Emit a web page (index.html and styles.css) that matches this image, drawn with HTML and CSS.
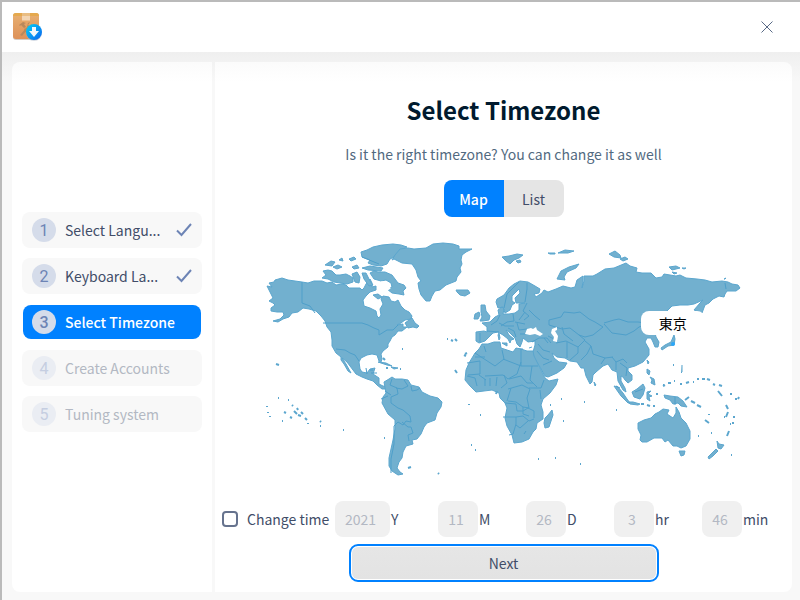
FILE: index.html
```
<!DOCTYPE html>
<html lang="en">
<head>
    <meta charset="UTF-8">
    <meta name="viewport" content="width=device-width, initial-scale=1.0">
    <title>Select Timezone</title>
    <link rel="stylesheet" href="styles.css">
</head>
<body>
    <header class="titlebar">
        <svg class="logo" width="32" height="32" viewBox="0 0 32 32" aria-hidden="true">
            <defs>
                <linearGradient id="box" x1="0" y1="0" x2="0" y2="1">
                    <stop offset="0" stop-color="#e8b071"/>
                    <stop offset="1" stop-color="#dd9159"/>
                </linearGradient>
                <linearGradient id="badge" x1="0" y1="0" x2="1" y2="1">
                    <stop offset="0" stop-color="#05d3f5"/>
                    <stop offset="1" stop-color="#0b62f0"/>
                </linearGradient>
            </defs>
            <rect x="2" y="3" width="26" height="26" rx="3" fill="#d3ccc5"/>
            <rect x="2" y="2" width="26" height="26" rx="3" fill="url(#box)"/>
            <path d="M5 2h20a3 3 0 0 1 3 3H2a3 3 0 0 1 3-3z" fill="#e5a94e"/>
            <path d="M11 2h8v3h-8z" fill="#e9bd83"/>
            <path d="M11 5h8v4l-1 1-1-1-1 1-1-1-1 1-1-1-1 1-1-1z" fill="#f3d5b3"/>
            <path d="M8 14l4-3 3 1-2 1 2 3-2 1-3-3-1 1zM19 11l-2 3 2 1 2-2-1 4-3 1-6 7-2-1 7-8 1-4zM14 17l7 8-2 1-6-7z" fill="#b8895c"/>
            <circle cx="23" cy="22" r="8" fill="#a9b5c8" opacity=".5"/>
            <circle cx="23" cy="21" r="8" fill="url(#badge)"/>
            <path d="M21 16h4v4h3l-5 6-5-6h3z" fill="#f3f7fb"/>
        </svg>
        <button class="close" type="button" aria-label="Close">
            <svg width="12" height="12" viewBox="0 0 12 12"><path d="M.5.5l11 11M11.5.5l-11 11" stroke="#596a86" fill="none"/></svg>
        </button>
    </header>

    <div class="window">
        <nav class="sidebar">
            <ol class="steps">
                <li class="step done">
                    <span class="num">1</span><span class="name">Select Langu...</span>
                    <svg class="check" width="16" height="14" viewBox="0 0 16 14"><path d="M1 7.500l4.500 4.500L15 1" fill="none" stroke="#6d84b5" stroke-width="2"/></svg>
                </li>
                <li class="step done">
                    <span class="num">2</span><span class="name">Keyboard La...</span>
                    <svg class="check" width="16" height="14" viewBox="0 0 16 14"><path d="M1 7.500l4.500 4.500L15 1" fill="none" stroke="#6d84b5" stroke-width="2"/></svg>
                </li>
                <li class="step active"><span class="num">3</span><span class="name">Select Timezone</span></li>
                <li class="step todo"><span class="num">4</span><span class="name">Create Accounts</span></li>
                <li class="step todo"><span class="num">5</span><span class="name">Tuning system</span></li>
            </ol>
        </nav>

        <main class="content">
            <h1>Select Timezone</h1>
            <p class="subtitle">Is it the right timezone? You can change it as well</p>
            <div class="switch">
                <button class="tab selected" type="button">Map</button>
                <button class="tab" type="button">List</button>
            </div>

            <div class="map">
                <svg viewBox="259 235 490 245" role="img" aria-label="World map">
                    <g class="land">
                        <!-- north america -->
                        <path d="M267 286l5 1-3-4 5-1 1-2 7-2 6 2 7 1 7 1 6 1 6-2 8 0 5 2 5-1 4 3 6-1 4 1 3 3 6 0 5 0 2 2 2-2 2-4 4-5 2 4 0 4 4-1 0 4-6 2-4 4-3 4 1 6 6 2 6 3 1 5 2 2 2-3-1-6 3-5-2-5 2-3 6 1 2 4 4 1 3-2 3 6 4 4 4 2 3 4-1 3-6 1-4 3-4 2 6-1 0 3 4 0-5 4-4 0-3 4-3 2-2 4-2 3 0 3-5 4-2 3 1 5-1 3-2-1-2-6-5-1-5 1-6 3-2 4 1 7 2 3 5 1 3-4 5-1-2 6 3 2 3 2 0 6 4 2 4 1-1 2-4 0-5-4-4-4-6-2-5-2-6-3-3-4-6-8-5-4 4 6 5 9-3-2-4-7-3-4 0-3-5-4-4-7 0-6-1-8-4-5-2-6-4-5-5-5-7-2-6-1-5 4-6 1-3 4-6 2-5 3-5-1 7-2 4-4-1-3-6 0-6-1 0-3 4-3-2-2-4-2 4-3z"/>
                        <!-- arctic islands -->
                        <path d="M361 252l6-2 6-3 9-2 11-1 8 1 6 2-8 4-3 5-6 3-3 5-6 2-8-1-5-2 2-3-8-3z"/>
                        <path d="M323 271l5-1 4 1 4 4 4 0 6-1 4 2 3 2 0 4-6 2-7-1-6-1-6-3-6-1 4-3z"/>
                        <path d="M370 273l4-2 4 1 7 0 7 3 3 4 3 4 6 2 2 3-3 3 1 4-5-1-7-1-5-4 5-2-1-4-5-3-5 1-7-2z"/>
                        <path d="M325 265l6-4 4 1-3 4zM333 267l5-2 4 2-5 2zM339 260l3-2 1 3zM349 259l5-2 2 2-5 2zM352 267l5-2 2 3-5 1zM352 274l5-2 3 5-1 6-4-1zM362 273l4 0 4 8 3 4-4 1-5-7zM362 268l8-2 13 2-2 3-13-1zM373 295l5-1 4 3-4 2z"/>
                        <path d="M405 323l4-3 3-2 3 5 4 3-2 2-4-1-5 1z"/>
                        <!-- greenland, iceland, svalbard -->
                        <path d="M392 260l3-5 5-6 8-1 6 1 12-1 7-4 10-1 10 1 6 2 0 3 13 0-6 3-4 3-1 5 1 4-2 4 1 4-4 5-1 4-5 2-5 2-6 5-5 1-3 5-2 5-4 0-5-6-2-6-1-6 3-2-3-4-2-7-4-6-10-1-8-4z"/>
                        <path d="M456 290l12 0 2 3-5 3-5-1-3-3zM502 257l7-1 8-2 6 1-4 3-5 2-4 4-4-3zM516 261l4-1 1 2-3 1zM548 253l7 0 0 1-5 0zM558 253l7-3 9 1-6 2z"/>
                        <path d="M557 279l4-8 8-4 10-3-3 4-9 4-3 5 1 3zM609 254l6-3 5 4 1 3-7-1zM620 259l5-2 3 2-5 2zM669 267l7-1 4 2-8 2zM682 268l4 0-2 1zM672 272l5 1-3 1zM724 279l2-1-1 1z"/>
                        <!-- eurasia -->
                        <path d="M476 332l8-1 3 1 0-5-5-4 8-1 5-5 4-2-1-5 4-3 2 2-1 5 6 0 6-1 4-3 0-6 6-1-9 0-1-5 5-5-1-4-3 3-4 4 0 5 3 2-3 2-2 5-5 3-2-6-5 1-2-6 1-3 7-4 5-7 5-4 6-3 8 1 7 4 5 3-1 4-5 1 2 3 6-4 2-3 4 2 8-3 7-3 8 2 4-1 2-7 6-4 0 5-1 7 2-7 0-5 9 0 4-2 8-5 9-1 12-5 4 3 7 2-1 4 6 1 9 0 5 5 6-1 2-3 12 2 4-1 6 3 11 1 8 1 7 2 10-1 6 1 4 2 6 1 2 3-4 3-9 0-2 3-1 3-5-1-6 3-4 4-4 2-3 8-8-3 6-7 3-3-9 4-6 1-8 0-8 1-5 5-8 6-4 9 0 7 1 4 3 5-1 5-3 0-2-5-2-4-4 0-2 4 4 7 0 6-6 7-8 4-7 2 0 3 4 4 0 5-4 3-3-3-2-3-2-1 0 5 4 7 1 4-3-2-5-9-1-9-5-2-4-6-5 2-7 6-3 3-1 7-2 2-4-8-2-8-3 0-4-6-7-1-5-3-8-1-5-4 2 5 5 4 8 1-3 5-7 5-9 4-3-1-5-9-6-9-1-6 2-7 0-4-7 1-5-4-1 4-2 5-3-3-2-6-6-6-3-2 3 5 5 4-3 1-1 3-2-4-5-4-5-3-5 1-4 4-4 4-6 2-3-2z"/>
                        <path d="M481 305l4 0 1 6 4 5-1 4-6 1-3 0 2-4-1-5zM475 314l4-2 1 3-2 4-4 0zM502 343l5 0 0 3zM499 333l1 5-1 2-1-5zM519 349l4 0M529 348l3-1"/>
                        <!-- africa -->
                        <path d="M475 353l4-4 3-5 6 0 6-2 6 0 1 6 6 2 6 2 3-4 5 1 6 2 6 0 1 5 6 12 5 10 4 3 9-2-2 6-6 8-7 6-2 6 2 7 0 7-6 4-1 6-3 3-4 7-7 3-8 1-2-8-5-9-2-8 2-10-2-5-5-5-1-5-7-3-8 1-8 1-6-6-5-6 1-10 3-7z"/>
                        <path d="M545 418l3-3 4-5 1 5-4 12-4 1-1-5z"/>
                        <!-- south america -->
                        <path d="M384 382l5-3 3-2 3 2 7 0 6 1 3 5 8 2 3 5 8 4 8 2 4 4-1 5-4 6-2 7-8 3-3 4-3 7-4 5-5 1 1 4-7 2-3 6-1 6-3 4-2 6 3 4 3 2-5 1-6-4-3-5 0-8 2-9 2-9 2-11 0-9-7-6-6-11 1-6 3-4z"/>
                        <!-- oceania -->
                        <path d="M638 423l6-3 7-2 4-4 4-2 4-3 6 1-2 4 6 4 3-5 0-6 3 5 2 6 5 5 4 8 0 8-4 7-5 2-4-2-4 0-5-6-3 2-3-4-8 0-7 4-5 0-2-2 1-5-3-6zM679 451l6 0-1 4-3 1zM717 441l2 3 5 1-3 4-3-1zM716 449l2 2-5 5-4 3-1-2z"/>
                        <path d="M614 386l4 1 5 6 4 6 3 4-2 0-7-7zM628 402l5 0 7 2-2 1-8-1zM632 392l5-3 6-5 2 4-2 7-3 4-6-2zM647 392l4-1-3 3 4 2-3 1 1 4-3-2zM664 395l6 1 8 1 5 4 4 6-6-1-3-3-5 1-3-4-5-2zM594 382l2 3-1 1zM647 369l3 2-1 4-2-2zM650 377l4 2 1 6-4-2 1-3zM647 360l2 2-1 2zM661 348l4-3 6-3 3-7 1 4-1 6-6 1-6 4z"/>
                        <path d="M378 362l8 1 6 3-5-1zM391 367l7 1-4 1zM682 365l0 7-1 1"/>
                    </g>
                    <g class="islands">
                        <path d="M383 358l2 2M386 368h2M400 369h1M402 349h1M447 339h1M451 340l2 1M455 339l2 2M464 355l2 1M465 354l2-1M455 370l2 3M408 468l3-1M438 473l1 1M276 364l3 1"/>
                        <path d="M278 398h1M292 405l1 1M297 408l1 2M284 412l2 1M290 417l2 1M268 412v1M270 416v1M267 406v1M282 421h1M298 415l3 1M305 418l2 2M308 423v1M320 421l1 1M320 426h1M343 430h1M384 438h1M288 400h1M294 411l3 3M301 412l2 2"/>
                        <path d="M469 404v1M480 415h1M471 445h1M475 450h1M538 459h1M555 458h1M580 464h1M561 399h1M584 402h1M563 421h1M616 410h1M550 405h1M497 391l-1 3"/>
                        <path d="M641 404h3M647 405l3 1M653 406h2M657 393v2M663 386l2-1M668 383h3M674 381h1M680 384h2M686 383l3-1M693 382h1M697 379h2M702 379h3M707 379l3 1M713 384l2 1M719 385l3 1M718 391l4 5M731 393v2M735 399h2M739 397l-1 2M685 400l4-3M691 401l4 2M697 405l4 2M726 405l2 4M705 420l4 3M709 414v1M724 417h1M734 416v2M728 412l-2 5M730 424h1M733 422v2M711 433h1M698 436h1M729 431l-2 5M731 455h1M663 385h1M673 365h1"/>
                    </g>
                    <g class="borders">
                        <path d="M302 282v21l8 3 5 7M323 323h39l6 2 6 3 5 2 0 5 8-5 6 0 5-5M336 349l9 1 5 3 5 2 4 6M366 368l1 6M370 370h3M371 373l6 0"/>
                        <path d="M392 379l-2 6 7 3 1 6-7 3 0 6 7 5 5 2 7 6 1 6-5-1-3 4-5-3-4 4 0 18-3 15 0 14M381 399l7-3M404 380l4 6-6 3-6-1M411 386l1 5 5-1 3-2M402 422l6 5 3 0 2 6-5 2 1 6M385 391l6 4"/>
                        <path d="M475 353l20 13 9-7-2-9M467 363l13-2 0 13-12 1M521 349v17h17M503 359l18 7M521 362l-4 12-9 5-5-4-18 1M504 375l3 8-6 5M509 379l12-3 6 7 6 0M508 389l14-4 8 4-3 9 2 10-6-1-7-5-8-1M529 388l12 0 3-8M540 390l1 9M511 388l-4 13M505 403l11 1 1 7 6 0 5-3 6 3 0 7M503 417l13 0 7-1 6 5 5-2M516 417v7l-3 10-4 1M516 425l4 3 8-7M526 431l-2 3M467 376l8 2 2 8M479 375l7 5M485 379l0 7M490 378v8M497 377l-1 9M532 366l-2 14 7 7M523 407v7l6 2M484 346l2 6M475 357h10"/>
                        <path d="M513 314l1 7-7 1-6 4M500 315l-3 6-6 4M515 322l10 2M525 312l-6 8M527 303l-4 8 6 5-5 4M527 283v6l-2 13M504 308l3-14 12-12M480 333l0 9M487 331l12 1M499 323l6 3 9 0M508 328l6 3 2 6M517 323l2 7 8-1M529 310l6 6 5 4M520 334l8 0M532 342l7-4 8 0 4 5M538 344l5 6 7 2M537 351l6 7 6 2M543 365l9-4M548 343l-4-5M549 320l12-3 3-5 10 1 6-1 9 7 6 3 8 5M549 320v5l13 4 8-1 9 7 6 2 8-2 10-8M604 323l10-3 5-1 9 3 10 0 8 1M604 324l8 9 14 2 8-4 5-4 8-3M556 343l10-2 12 6 7-7-6-5M567 342l0 16M578 347l0 6-8 7M585 341l6 5-4 8-6 6M591 346l2 8 12 4 8-1M605 358l-4 6M612 357l4 5 0 8M616 362l7-3 4 4M620 363l7 5-1 8M562 327l2 7 9 7M548 336l10 5"/>
                        <path d="M675 397v8M725 283l1 6M635 392l8-3M362 257l17 7M616 386l4 2"/>
                    </g>
                    <!-- inland seas -->
                    <g class="water">
                        <path d="M525 334l2-5 4-1 2 1 3-2 1 3 6 4-3 2-5-2-5 1z"/>
                        <path d="M552 329l5-2 0 3-2 1 3 5-1 6-4-1 1-4-3-4z"/>
                        <path d="M378 284l4-3 5 4 4 3-5 4-7 1z"/>
                    </g>
                    <circle cx="673" cy="344" r="2" fill="#2ca7f8"/>
                </svg>
                <span class="zone" lang="ja">東京</span>
            </div>

            <form class="time">
                <label class="toggle"><input type="checkbox"> Change time</label>
                <label class="field year"><input type="text" value="2021" disabled>Y</label>
                <label class="field"><input type="text" value="11" disabled>M</label>
                <label class="field"><input type="text" value="26" disabled>D</label>
                <label class="field"><input type="text" value="3" disabled>hr</label>
                <label class="field"><input type="text" value="46" disabled>min</label>
            </form>
            <button class="next" type="button">Next</button>
        </main>
    </div>
</body>
</html>
```
FILE: styles.css
```
* {
    box-sizing: border-box;
}
body {
    margin: 0;
    min-height: 100vh;
    display: flex;
    flex-direction: column;
    border-top: 2px solid #bababa;
    border-left: 2px solid #bababa;
    background: #f8f8f8;
    color: #414d68;
    font-family: "Noto Sans CJK SC", sans-serif;
    font-size: 14px;
    line-height: 22px;
}
button, input {
    font: inherit;
    color: inherit;
    border: none;
    padding: 0;
    margin: 0;
}
.titlebar {
    height: 50px;
    padding: 0 27px 0 9px;
    display: flex;
    align-items: center;
    justify-content: space-between;
    background: #fff;
}
.logo {
    display: block;
}
.close {
    display: flex;
    background: none;
}
.window {
    flex: 1;
    display: flex;
    gap: 3px;
    padding: 10px 8px 8px 10px;
    background: linear-gradient(#efefef, #f8f8f8 30px);
}
.sidebar, .content {
    background: linear-gradient(#fbfbfb, #fff 20px);
}
.sidebar {
    flex: none;
    width: 200px;
    padding: 0 10px 10px;
    display: flex;
    align-items: center;
    border-radius: 8px 0 0 8px;
}
.steps {
    width: 100%;
    margin: 0;
    padding: 0;
    list-style: none;
    display: grid;
    grid-template-columns: minmax(0, 1fr);
    gap: 10px;
}
.step {
    height: 36px;
    padding: 0 10px;
    display: flex;
    align-items: center;
    gap: 9px;
    border-radius: 8px;
    background: #f8f8f8;
}
.num {
    flex: none;
    width: 24px;
    height: 24px;
    border-radius: 50%;
    background: #d5dcea;
    color: #6d84b5;
    font-family: Roboto, sans-serif;
    font-size: 16px;
    line-height: 26px;
    text-align: center;
}
.name {
    flex: 1;
    white-space: nowrap;
}
.check {
    flex: none;
}
.active {
    height: 34px;
    margin: 1px;
    padding: 0 9px;
    background: #0081ff;
    color: #fff;
    font-weight: 500;
}
.todo {
    color: #b3b8c3;
}
.todo .num {
    background: #eaedf3;
    color: #c5cee1;
}
.content {
    flex: 1;
    min-width: 0;
    padding: 28px 0 13px;
    display: flex;
    flex-direction: column;
    align-items: center;
    border-radius: 0 8px 8px 0;
}
h1 {
    margin: 0;
    color: #001a2e;
    font-size: 24px;
    font-weight: 700;
    line-height: 40px;
}
.subtitle {
    margin: 13px 0 15px;
    color: #526a7f;
}
.switch {
    display: flex;
    border-radius: 8px;
    overflow: hidden;
}
.tab {
    width: 60px;
    height: 37px;
    background: #e5e5e5;
}
.tab.selected {
    background: #0081ff;
    color: #fff;
    font-weight: 500;
}
.map {
    position: relative;
    width: 100%;
    max-width: 490px;
    margin: 18px 0 21px;
}
.map svg {
    display: block;
    width: 100%;
}
.land {
    fill: #72b0cf;
    stroke: #5ba6ce;
    stroke-width: 1;
    stroke-linejoin: round;
}
.islands {
    fill: none;
    stroke: #5ba6ce;
    stroke-width: 2;
}
.borders {
    fill: none;
    stroke: #4e9fca;
    stroke-linejoin: round;
}
.water {
    fill: #fff;
}
.zone {
    position: absolute;
    left: 78%;
    top: 31%;
    padding: 1px 18px;
    border-radius: 8px;
    background: #fff;
    color: #000;
    font-family: "Noto Sans CJK JP", sans-serif;
}
.time {
    width: 100%;
    padding: 0 2px 0 7px;
    display: grid;
    grid-template-columns: 113fr 103fr 88fr 88fr 88fr 88fr;
}
.toggle, .field {
    display: flex;
    align-items: center;
    white-space: nowrap;
}
.toggle {
    gap: 9px;
}
.toggle input {
    appearance: none;
    width: 16px;
    height: 16px;
    border: 2px solid #66738e;
    border-radius: 4px;
}
.field {
    gap: 1px;
}
.field input {
    width: 40px;
    height: 36px;
    padding: 0 4px 0 0;
    border-radius: 8px;
    background: #f0f0f0;
    color: #b3b8c3;
    text-align: center;
}
.year input {
    width: 55px;
}
.next {
    width: 304px;
    height: 32px;
    margin-top: 10px;
    border-radius: 6px;
    background: linear-gradient(#e6e6e6, #e3e3e3);
    outline: 2px solid #0081ff;
    outline-offset: 1px;
}
```
